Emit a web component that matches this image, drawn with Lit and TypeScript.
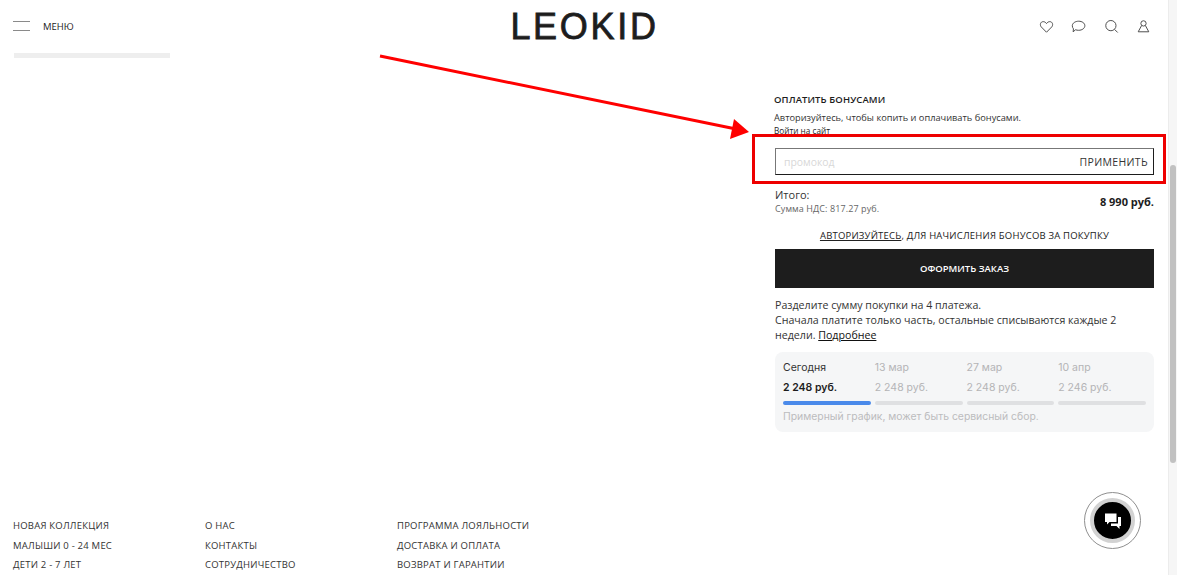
import { LitElement, html, css } from "lit";
import { customElement } from "lit/decorators.js";

const footer = [
  ["НОВАЯ КОЛЛЕКЦИЯ", "МАЛЫШИ 0 - 24 МЕС", "ДЕТИ 2 - 7 ЛЕТ"],
  ["О НАС", "КОНТАКТЫ", "СОТРУДНИЧЕСТВО"],
  ["ПРОГРАММА ЛОЯЛЬНОСТИ", "ДОСТАВКА И ОПЛАТА", "ВОЗВРАТ И ГАРАНТИИ"],
];
const plan = [
  { d: "Сегодня", a: "2 248 руб.", on: true },
  { d: "13 мар", a: "2 248 руб.", on: false },
  { d: "27 мар", a: "2 248 руб.", on: false },
  { d: "10 апр", a: "2 246 руб.", on: false },
];

@customElement("app-root")
export class AppRoot extends LitElement {
  static styles = css`
    :host { display: flex; width: 1177px; height: 575px; overflow: hidden; position: relative; background: #fff; color: #1d1d1d; font-family: "Open Sans", "Noto Sans", sans-serif; }
    .page { width: 1168px; height: 575px; display: flex; flex-direction: column; flex: none; }
    .scroll { width: 9px; flex: none; background: #f6f6f6; border-left: 1px solid #ececec; box-sizing: border-box; padding: 165px 0 0 1px; }
    .thumb { width: 6px; height: 298px; background: #c1c1c1; border-radius: 3px; }
    header { height: 53px; flex: none; display: grid; grid-template-columns: 1fr auto 1fr; align-items: center; padding: 0 17px 0 13px; }
    .menu { display: flex; align-items: center; gap: 13px; font-size: 9.5px; padding-bottom: 1px; }
    .burger { width: 17px; height: 8px; border-top: 1px solid #8a8a8a; border-bottom: 1px solid #8a8a8a; }
    .logo { font-family: "Liberation Sans", sans-serif; font-size: 36px; line-height: 53px; letter-spacing: 2.7px; color: #1d1d1d; -webkit-text-stroke: 0.8px #1d1d1d; margin-right: -5px; }
    .icons { display: flex; justify-content: flex-end; gap: 17.5px; align-items: center; }
    .icons svg { width: 15px; height: 15px; fill: none; stroke: #4a4a4a; stroke-width: 1.1; display: block; }
    main { flex: 1; display: flex; justify-content: space-between; padding: 0 14px; min-height: 0; }
    .skel { width: 156px; height: 5px; background: #eeeeee; }
    .side { width: 379px; padding-top: 40px; }
    .h { font-size: 9.5px; font-weight: 600; line-height: 13px; margin-left: -1px; letter-spacing: 0.1px; }
    .note { font-size: 9.25px; line-height: 13px; margin: 5px 0 0 -1px; color: #333; }
    .login { font-size: 8.2px; line-height: 13px; margin-left: -1px; }
    .promo { height: 27px; box-sizing: border-box; border: 1px solid #1d1d1d; border-top-color: #777; border-left-color: #777; display: flex; align-items: center; justify-content: space-between; padding: 0 5px 0 8px; margin-top: 11px; }
    .ph { font-size: 10.4px; color: #d8d8d8; }
    .apply { font-size: 10.5px; color: #333; letter-spacing: 0.35px; }
    .total { display: flex; justify-content: space-between; align-items: center; margin-top: 12px; }
    .t1 { font-size: 11px; line-height: 15px; color: #333; }
    .t2 { font-size: 9px; line-height: 14px; color: #666; letter-spacing: 0.1px; }
    .sum { font-size: 11px; font-weight: 700; }
    .auth { text-align: center; font-size: 9.5px; line-height: 14px; margin-top: 13px; color: #222; letter-spacing: 0.2px; }
    .auth u { text-underline-offset: 1px; }
    .btn { margin-top: 6px; height: 39px; background: #1d1d1d; color: #fff; display: flex; align-items: center; justify-content: center; font-size: 9.5px; font-weight: 600; }
    .split { margin-top: 10px; font-size: 10.65px; line-height: 15px; color: #333; }
    .split u { color: #111; }
    .card { margin-top: 9px; height: 80px; box-sizing: border-box; background: #f5f6f7; border-radius: 8px; padding: 9px 8px 0; font-family: Inter, sans-serif; }
    .cols { display: grid; grid-template-columns: repeat(4, 1fr); gap: 4px; }
    .d { font-size: 10.5px; line-height: 14px; color: #b4b4b6; }
    .a { font-size: 10.5px; line-height: 14px; margin-top: 6px; color: #b4b4b6; }
    .on .d { color: #333; }
    .on .a { color: #1d1d1d; font-weight: 600; }
    .bar { height: 4px; border-radius: 2px; background: #dfe0e2; margin-top: 6px; }
    .on .bar { background: #4a8aea; }
    .hint { font-size: 10.4px; line-height: 14px; margin-top: 5px; color: #bcbcbe; }
    footer { flex: none; height: 59px; display: grid; grid-template-columns: repeat(3, 192px); padding-left: 13px; box-sizing: border-box; font-size: 9.5px; line-height: 19.5px; color: #333; letter-spacing: 0.22px; }
    .overlay { position: absolute; left: 0; top: 0; width: 1177px; height: 575px; pointer-events: none; }
    .chat { position: absolute; left: 1084px; top: 492px; width: 57px; height: 57px; box-sizing: border-box; border-radius: 50%; border: 1px solid #8f8f8f; background: #fff; display: flex; align-items: center; justify-content: center; }
    .chat-in { width: 45px; height: 45px; box-sizing: border-box; border-radius: 50%; border: 4px solid #d2d2d2; background: #000; display: flex; align-items: center; justify-content: center; }
    .chat-in svg { width: 18px; height: 18px; fill: #fff; }
  `;

  render() {
    return html`
      <div class="page">
        <header>
          <div class="menu"><div class="burger"></div><span>МЕНЮ</span></div>
          <div class="logo">LEOKID</div>
          <div class="icons">
            <svg viewBox="0 0 17 17"><path d="M8.500 15 2.600 9C.6 6.800 1.600 3 4.800 3c1.600 0 2.800.9 3.700 2.200C9.400 3.900 10.600 3 12.200 3c3.200 0 4.200 3.800 2.200 6z"/></svg>
            <svg viewBox="0 0 17 17"><path d="M8.700 2.500c3.900 0 7 2.200 7 5.100s-3.100 5.200-7 5.200c-1.300 0-2.500-.2-3.500-.6L2.400 14.500l.4-3.300C1.900 10.200 1.500 9 1.500 7.600c0-2.900 3.300-5.100 7.200-5.100z"/></svg>
            <svg viewBox="0 0 17 17"><circle cx="7.800" cy="7.500" r="5.800"/><path d="m12 11.800 3.500 3.500"/></svg>
            <svg viewBox="0 0 17 17"><circle cx="8.500" cy="5" r="3"/><path d="M6.300 7.500 2.500 14.500h12L10.700 7.500"/></svg>
          </div>
        </header>
        <main>
          <div class="skel"></div>
          <div class="side">
            <div class="h">ОПЛАТИТЬ БОНУСАМИ</div>
            <div class="note">Авторизуйтесь, чтобы копить и оплачивать бонусами.</div>
            <div class="login">Войти на сайт</div>
            <div class="promo"><span class="ph">промокод</span><span class="apply">ПРИМЕНИТЬ</span></div>
            <div class="total">
              <div><div class="t1">Итого:</div><div class="t2">Сумма НДС: 817.27 руб.</div></div>
              <div class="sum">8 990 руб.</div>
            </div>
            <div class="auth"><u>АВТОРИЗУЙТЕСЬ</u>, ДЛЯ НАЧИСЛЕНИЯ БОНУСОВ ЗА ПОКУПКУ</div>
            <div class="btn">ОФОРМИТЬ ЗАКАЗ</div>
            <div class="split">
              <div>Разделите сумму покупки на 4 платежа.</div>
              <div>Сначала платите только часть, остальные списываются каждые 2</div>
              <div>недели. <u>Подробнее</u></div>
            </div>
            <div class="card">
              <div class="cols">
                ${plan.map((p) => html`<div class=${p.on ? "on" : ""}><div class="d">${p.d}</div><div class="a">${p.a}</div><div class="bar"></div></div>`)}
              </div>
              <div class="hint">Примерный график, может быть сервисный сбор.</div>
            </div>
          </div>
        </main>
        <footer>
          ${footer.map((c) => html`<div>${c.map((t) => html`<div>${t}</div>`)}</div>`)}
        </footer>
      </div>
      <div class="scroll"><div class="thumb"></div></div>
      <svg class="overlay" viewBox="0 0 1177 575">
        <line x1="380" y1="56" x2="736" y2="129" stroke="#ff0000" stroke-width="3"/>
        <polygon points="749,132 730,139 734,119" fill="#ff0000"/>
        <rect x="753.500" y="135.500" width="411" height="47" fill="none" stroke="#ee0000" stroke-width="3"/>
      </svg>
      <div class="chat"><div class="chat-in">
        <svg viewBox="0 0 18 18"><path d="M1 1.500h11.500v8.500H5.500L3 12.500V10H1z"/><path d="M14 5h3v9h-1.500v3L12.500 14H7v-2.500h7z"/></svg>
      </div></div>
    `;
  }
}
